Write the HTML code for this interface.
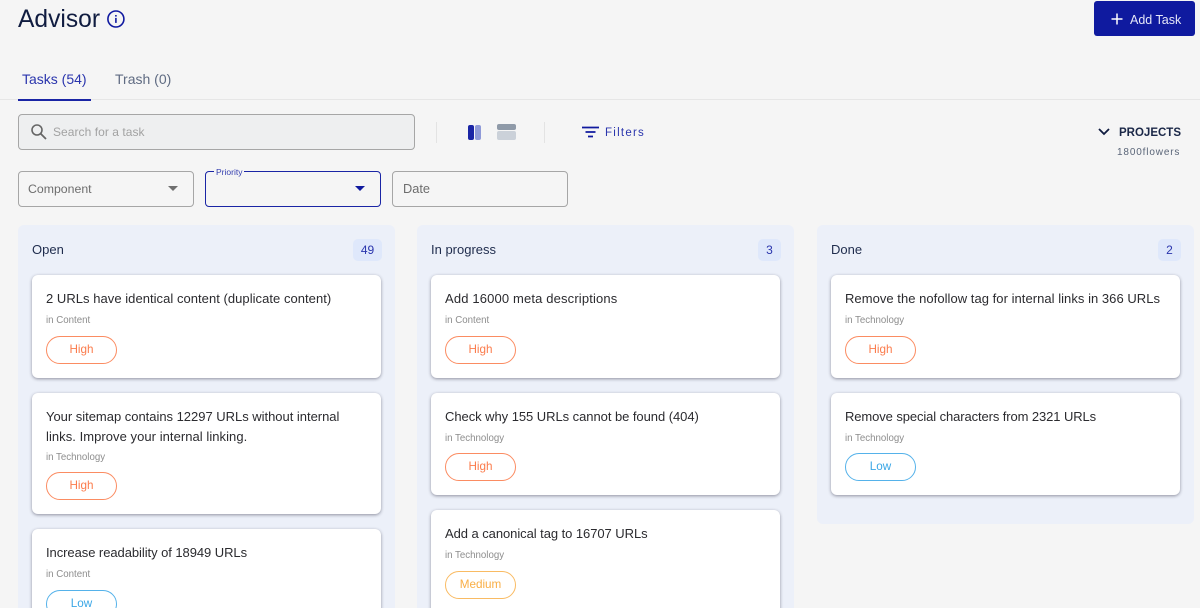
<!DOCTYPE html>
<html><head><meta charset="utf-8"><style>
html,body{margin:0;padding:0;width:1200px;height:608px;overflow:hidden;background:#f5f5f5;font-family:"Liberation Sans",sans-serif}
#p{position:relative;width:1200px;height:608px;overflow:hidden}
#p>*,.col>*,.card>*{position:absolute}
.t{white-space:nowrap;line-height:20px}
.col{background:#ecf0f9;border-radius:6px;width:377px}
.card{background:#fff;border-radius:6px;left:14px;width:349px;box-shadow:0 1px 3px rgba(40,40,60,.48)}
.card .h{left:14px;top:14px;font-size:13px;line-height:20px;color:#2b2b2f;white-space:nowrap}
.card .s{left:14px;font-size:9.7px;line-height:12px;color:#8d8d8d;white-space:nowrap}
.card .b{left:14px;width:69px;height:26px;line-height:26px;border-radius:14px;border:1px solid;background:#fff;text-align:center;font-size:11.7px}
.hi{color:#fb7c4c;border-color:#fb8c62!important}
.lo{color:#3aa6e6;border-color:#55b2ea!important}
.me{color:#f9ae45;border-color:#f9bb63!important}
.ct{top:14px;height:22px;line-height:22px;border-radius:5px;background:#dfe8fb;color:#2a35ad;font-size:12px;text-align:center}
.ch{left:14px;top:15px;font-size:13px;line-height:20px;color:#1f2c4d}
</style></head><body><div id="p">
<div class="t" style="left:18px;top:5px;font-size:24.6px;line-height:30px;color:#101c40">Advisor</div>
<svg style="left:106px;top:10px" width="19" height="19" viewBox="0 0 19 19"><circle cx="9.9" cy="9" r="8" fill="none" stroke="#1019a0" stroke-width="1.6"/><rect x="9.1" y="7.9" width="1.6" height="5" fill="#1019a0"/><rect x="9.1" y="5" width="1.6" height="1.6" fill="#1019a0"/></svg>
<div style="left:1094px;top:1px;width:101px;height:35px;background:#0f1a9f;border-radius:3px"></div>
<svg style="left:1110px;top:12px" width="14" height="14"><path d="M7 1.5v11M1.5 7h11" stroke="#fff" stroke-width="1.5"/></svg>
<div class="t" style="left:1130px;top:10px;font-size:12.5px;color:#e6e8f8">Add Task</div>

<div class="t" style="left:22px;top:69px;font-size:14px;color:#2a35ad">Tasks (54)</div>
<div class="t" style="left:115px;top:69px;font-size:14px;color:#5f6b82">Trash (0)</div>
<div style="left:0;top:99px;width:1200px;height:1px;background:#e6e6e6"></div>
<div style="left:18px;top:99px;width:73px;height:2px;background:#1a25a5"></div>

<div style="left:18px;top:114px;width:395px;height:34px;background:#eeeff0;border:1px solid #a6a6a6;border-radius:4px"></div>
<svg style="left:30px;top:123px" width="18" height="18"><circle cx="7" cy="7" r="5" fill="none" stroke="#666" stroke-width="1.6"/><path d="M10.5 10.5l5.5 5.5" stroke="#666" stroke-width="1.8"/></svg>
<div class="t" style="left:53px;top:122px;font-size:12px;letter-spacing:.05px;color:#a2a2a2">Search for a task</div>
<div style="left:436px;top:122px;width:1px;height:21px;background:#e3e3e3"></div>
<div style="left:544px;top:122px;width:1px;height:21px;background:#e3e3e3"></div>
<div style="left:468px;top:125px;width:6px;height:15px;border-radius:2px;background:#1a25a5"></div>
<div style="left:475px;top:125px;width:6px;height:15px;border-radius:2px;background:#8f9ad8"></div>
<div style="left:497px;top:124px;width:19px;height:6px;border-radius:2px;background:#8f9aa8"></div>
<div style="left:497px;top:131px;width:19px;height:9px;border-radius:2px;background:#cbd1d9"></div>
<svg style="left:581px;top:125px" width="19" height="14"><path d="M1 2.5h17M4.5 7h10M7 11.5h5" stroke="#101a9e" stroke-width="1.7"/></svg>
<div class="t" style="left:605px;top:123px;font-size:11.5px;letter-spacing:1.25px;color:#2a35ad">Filters</div>
<svg style="left:1097px;top:127px" width="14" height="10"><path d="M2 2l5 5 5-5" fill="none" stroke="#101c40" stroke-width="1.8"/></svg>
<div class="t" style="left:1119px;top:123px;font-size:11.5px;font-weight:bold;color:#1a2747">PROJECTS</div>
<div class="t" style="left:1117px;top:143px;font-size:10px;letter-spacing:.85px;color:#5a6578">1800flowers</div>

<div style="left:18px;top:171px;width:174px;height:34px;border:1px solid #a6a6a6;border-radius:4px"></div>
<div class="t" style="left:28px;top:179px;font-size:12.3px;color:#6d6d6d">Component</div>
<div style="left:168px;top:186px;border:5px solid transparent;border-top-color:#6f6f6f;border-bottom:0"></div>
<div style="left:205px;top:171px;width:174px;height:34px;border:1px solid #1a25a5;border-radius:4px"></div>
<div class="t" style="left:214px;top:167px;padding:0 2px;background:#f5f5f5;font-size:8.5px;line-height:11px;color:#3640b0">Priority</div>
<div style="left:355px;top:186px;border:5px solid transparent;border-top-color:#101a9e;border-bottom:0"></div>
<div style="left:392px;top:171px;width:174px;height:34px;border:1px solid #a6a6a6;border-radius:4px"></div>
<div class="t" style="left:403px;top:179px;font-size:12.8px;color:#6d6d6d">Date</div>

<div class="col" style="left:18px;top:225px;height:400px">
 <div class="ch">Open</div><div class="ct" style="left:335px;width:29px">49</div>
 <div class="card" style="top:50px;height:103px"><div class="h" style="letter-spacing:.04px">2 URLs have identical content (duplicate content)</div><div class="s" style="top:40px">in Content</div><div class="b hi" style="top:61px">High</div></div>
 <div class="card" style="top:168px;height:121px"><div class="h"><span style="letter-spacing:-.02px">Your sitemap contains 12297 URLs without internal</span><br><span style="letter-spacing:.05px">links. Improve your internal linking.</span></div><div class="s" style="top:59px">in Technology</div><div class="b hi" style="top:79px">High</div></div>
 <div class="card" style="top:304px;height:120px"><div class="h" style="letter-spacing:-.06px">Increase readability of 18949 URLs</div><div class="s" style="top:40px">in Content</div><div class="b lo" style="top:61px">Low</div></div>
</div>

<div class="col" style="left:417px;top:225px;height:400px">
 <div class="ch">In progress</div><div class="ct" style="left:341px;width:23px">3</div>
 <div class="card" style="top:50px;height:103px"><div class="h" style="letter-spacing:.15px">Add 16000 meta descriptions</div><div class="s" style="top:40px">in Content</div><div class="b hi" style="top:61px">High</div></div>
 <div class="card" style="top:168px;height:102px"><div class="h" style="letter-spacing:-.05px">Check why 155 URLs cannot be found (404)</div><div class="s" style="top:40px">in Technology</div><div class="b hi" style="top:60px">High</div></div>
 <div class="card" style="top:285px;height:120px"><div class="h" style="letter-spacing:-.06px">Add a canonical tag to 16707 URLs</div><div class="s" style="top:40px">in Technology</div><div class="b me" style="top:61px">Medium</div></div>
</div>

<div class="col" style="left:817px;top:225px;height:299px">
 <div class="ch">Done</div><div class="ct" style="left:341px;width:23px">2</div>
 <div class="card" style="top:50px;height:103px"><div class="h" style="letter-spacing:.04px">Remove the nofollow tag for internal links in 366 URLs</div><div class="s" style="top:40px">in Technology</div><div class="b hi" style="top:61px">High</div></div>
 <div class="card" style="top:168px;height:102px"><div class="h" style="letter-spacing:-.1px">Remove special characters from 2321 URLs</div><div class="s" style="top:40px">in Technology</div><div class="b lo" style="top:60px">Low</div></div>
</div>
</div></body></html>
